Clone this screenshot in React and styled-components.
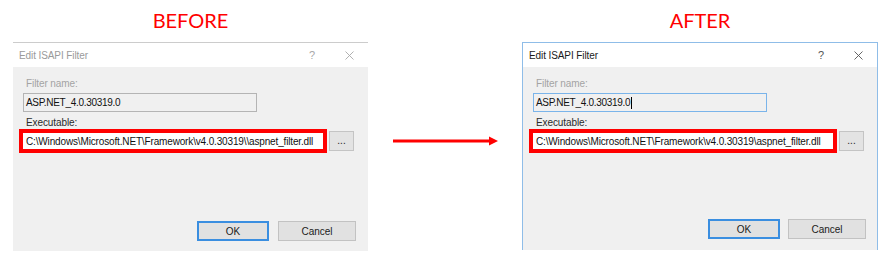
import React from "react";
import styled, { createGlobalStyle } from "styled-components";

const Global = createGlobalStyle`
  html, body { margin: 0; padding: 0; background: #ffffff; }
  body {
    width: 891px;
    height: 267px;
    overflow: hidden;
    font-family: "Liberation Sans", Arial, sans-serif;
  }
`;

const Page = styled.div`
  display: flex;
  align-items: flex-start;
  padding-left: 13px;
`;

const Column = styled.section`
  display: flex;
  flex-direction: column;
  width: ${(p) => p.$width}px;
`;

const Heading = styled.h2`
  margin: 0;
  height: 42px;
  font-family: Lato, "Liberation Sans", sans-serif;
  font-weight: 400;
  font-size: 20px;
  line-height: 41px;
  text-align: center;
  color: #ff0000;
`;

const Dialog = styled.div`
  box-sizing: border-box;
  height: ${(p) => (p.$active ? 208 : 209)}px;
  display: flex;
  flex-direction: column;
  border-top: 1px solid ${(p) => (p.$active ? "#8fbde8" : "#cccccc")};
  border-left: ${(p) => (p.$active ? "1px solid #8fbde8" : "none")};
  border-right: ${(p) => (p.$active ? "1px solid #8fbde8" : "none")};
`;

const TitleBar = styled.div`
  height: 24px;
  flex: none;
  display: flex;
  align-items: center;
  background: #ffffff;
  padding: 0 14px 0 6px;
  font-size: 10px;
  color: ${(p) => (p.$active ? "#1a1a1a" : "#9a9a9a")};
`;

const Title = styled.span`
  flex: 1;
  letter-spacing: -0.1px;
`;

const Help = styled.span`
  font-size: 11px;
  color: ${(p) => (p.$active ? "#555555" : "#a8a8a8")};
  margin-right: 30px;
`;

const CloseIcon = styled.svg`
  width: 9px;
  height: 9px;
  display: block;
`;

const Body = styled.div`
  flex: 1;
  display: flex;
  flex-direction: column;
  background: #f0f0f0;
  padding: 0 ${(p) => (p.$active ? 11 : 12)}px ${(p) => (p.$active ? 11 : 10)}px 0;
`;

const Label = styled.div`
  font-size: 10px;
  line-height: 12px;
  margin-left: 13px;
  margin-top: ${(p) => p.$top}px;
  color: ${(p) => (p.$disabled ? "#a3a3a3" : "#2a2a2a")};
  letter-spacing: -0.1px;
`;

const NameBox = styled.div`
  box-sizing: border-box;
  width: 234px;
  height: 19px;
  margin: 3px 0 0 10px;
  padding-left: 2px;
  display: flex;
  align-items: center;
  border: 1px solid ${(p) => (p.$active ? "#7ab4ea" : "#b4b4b4")};
  background: #f0f0f0;
  font-size: 10px;
  color: #111111;
  letter-spacing: -0.3px;
`;

const Caret = styled.span`
  display: inline-block;
  width: 1px;
  height: 12px;
  margin-left: 1px;
  background: #000000;
`;

const ExeRow = styled.div`
  display: flex;
  align-items: center;
  gap: 2px;
  margin-left: 6px;
`;

const Highlight = styled.div`
  box-sizing: border-box;
  width: 308px;
  height: 24px;
  border: 4px solid #ff0000;
  background: #ffffff;
  display: flex;
  align-items: center;
  font-size: 10px;
  color: #111111;
  letter-spacing: -0.15px;
  white-space: nowrap;
  overflow: hidden;
`;

const PathText = styled.span`
  padding-left: 3px;
`;

const Browse = styled.div`
  box-sizing: border-box;
  width: 25px;
  height: 20px;
  border: 1px solid #c4c4c4;
  background: #e3e3e3;
  font-size: 10px;
  line-height: 18px;
  text-align: center;
  color: #222222;
`;

const Buttons = styled.div`
  margin-top: auto;
  display: flex;
  justify-content: flex-end;
  gap: ${(p) => (p.$active ? 8 : 9)}px;
`;

const Button = styled.div`
  box-sizing: border-box;
  width: ${(p) => p.$w}px;
  height: 20px;
  display: flex;
  align-items: center;
  justify-content: center;
  background: #e1e1e1;
  border: ${(p) => (p.$default ? "2px solid #3a8ee0" : "1px solid #c2c2c2")};
  font-size: 10px;
  color: #1a1a1a;
`;

const Arrow = styled.svg`
  flex: none;
  width: 105px;
  height: 10px;
  margin: 136px 24px 0 25px;
  display: block;
`;

function IsapiDialog({ active, path }) {
  return (
    <Dialog $active={active}>
      <TitleBar $active={active}>
        <Title>Edit ISAPI Filter</Title>
        <Help $active={active}>?</Help>
        <CloseIcon viewBox="0 0 9 9">
          <path
            d="M0.5 0.5 L8.5 8.5 M8.5 0.5 L0.5 8.5"
            stroke={active ? "#555555" : "#a8a8a8"}
            strokeWidth="0.9"
            fill="none"
          />
        </CloseIcon>
      </TitleBar>
      <Body $active={active}>
        <Label $top={11} $disabled>
          Filter name:
        </Label>
        <NameBox $active={active}>
          ASP.NET_4.0.30319.0
          {active && <Caret />}
        </NameBox>
        <Label $top={5}>Executable:</Label>
        <ExeRow>
          <Highlight>
            <PathText>{path}</PathText>
          </Highlight>
          <Browse>...</Browse>
        </ExeRow>
        <Buttons $active={active}>
          <Button $w={72} $default>
            OK
          </Button>
          <Button $w={78}>Cancel</Button>
        </Buttons>
      </Body>
    </Dialog>
  );
}

export default function App() {
  return (
    <>
      <Global />
      <Page>
        <Column $width={355}>
          <Heading>BEFORE</Heading>
          <IsapiDialog
            active={false}
            path={"C:\\Windows\\Microsoft.NET\\Framework\\v4.0.30319\\\\aspnet_filter.dll"}
          />
        </Column>
        <Arrow viewBox="0 0 105 10">
          <line x1="0" y1="5" x2="98" y2="5" stroke="#ff0000" strokeWidth="3" />
          <polygon points="96,0.5 105,5 96,9.5" fill="#ff0000" />
        </Arrow>
        <Column $width={356}>
          <Heading>AFTER</Heading>
          <IsapiDialog
            active={true}
            path={"C:\\Windows\\Microsoft.NET\\Framework\\v4.0.30319\\aspnet_filter.dll"}
          />
        </Column>
      </Page>
    </>
  );
}
